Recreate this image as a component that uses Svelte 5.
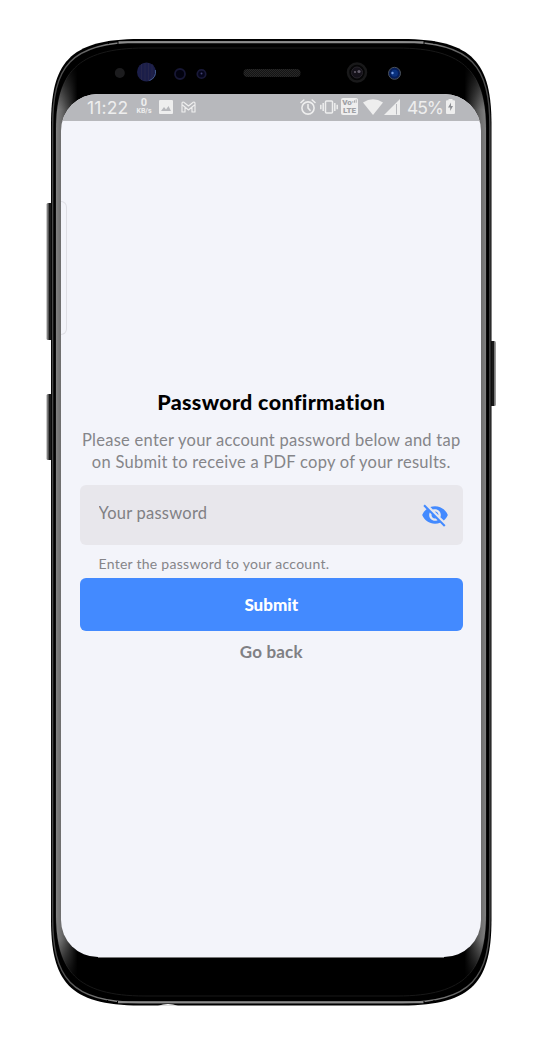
<script>
  let password = $state('');
  let visible = $state(false);
  const outer = 'M51 125C51 64 68 39 140 39H402C474 39 491.500 64 491.500 125V919C491.500 980 474 1005.500 402 1005.500H140C68 1005.500 51 980 51 919Z';
  const rim = 'M52.600 127C52.600 67 70 42 140 42H402C472 42 489.900 67 489.900 127V917C489.900 977 472 1002.500 402 1002.500H140C70 1002.500 52.600 977 52.600 917Z';
  const inner = 'M56 130C56 74 76 48 145 48H397C466 48 486 74 486 130V914C486 970 466 996 397 996H145C76 996 56 970 56 914Z';
</script>

<main class="phone">
  <svg class="frame" viewBox="0 0 542 1051" aria-hidden="true">
    <defs>
      <linearGradient id="sides" gradientUnits="userSpaceOnUse" x1="56" x2="486" y1="0" y2="0">
        <stop offset="0" stop-color="#808080" />
        <stop offset=".012" stop-color="#6d6d6d" />
        <stop offset=".035" stop-color="#303030" />
        <stop offset=".05" stop-color="#000" />
        <stop offset=".95" stop-color="#000" />
        <stop offset=".965" stop-color="#303030" />
        <stop offset=".988" stop-color="#6d6d6d" />
        <stop offset="1" stop-color="#808080" />
      </linearGradient>
      <linearGradient id="fade" x1="0" x2="0" y1="0" y2="1">
        <stop offset="0" stop-color="#000" />
        <stop offset=".015" stop-color="#000" />
        <stop offset=".065" stop-color="#fff" />
        <stop offset=".94" stop-color="#fff" />
        <stop offset=".985" stop-color="#000" />
      </linearGradient>
      <mask id="ends"><rect x="50" y="48" width="442" height="948" fill="url(#fade)" /></mask>
      <linearGradient id="rimLight" x1="0" x2="1" y1="0" y2="0">
        <stop offset="0" stop-color="#484848" />
        <stop offset=".1" stop-color="#707070" />
        <stop offset=".2" stop-color="#999" />
        <stop offset=".8" stop-color="#999" />
        <stop offset=".9" stop-color="#707070" />
        <stop offset="1" stop-color="#484848" />
      </linearGradient>
      <linearGradient id="key" x1="0" x2="1" y1="0" y2="0">
        <stop offset="0" stop-color="#999" />
        <stop offset=".3" stop-color="#666" />
        <stop offset=".45" stop-color="#151515" />
        <stop offset="1" stop-color="#222" />
      </linearGradient>
      <linearGradient id="keyRight" x1="1" x2="0" y1="0" y2="0">
        <stop offset="0" stop-color="#aaa" />
        <stop offset=".25" stop-color="#777" />
        <stop offset=".42" stop-color="#151515" />
        <stop offset="1" stop-color="#222" />
      </linearGradient>
      <pattern id="mesh" width="2" height="2" patternUnits="userSpaceOnUse">
        <rect width="2" height="2" fill="#141414" /><rect width="1" height="1" fill="#282828" /><rect x="1" y="1" width="1" height="1" fill="#282828" />
      </pattern>
    </defs>
    <rect x="46.500" y="203" width="6" height="137" rx="1.500" fill="url(#key)" />
    <rect x="46.500" y="394" width="6" height="66" rx="1.500" fill="url(#key)" />
    <rect x="490" y="341" width="6" height="65" rx="1.500" fill="url(#keyRight)" />
    <path d={outer} fill="#000" />
    <path d={rim} fill="none" stroke="url(#rimLight)" stroke-width="1.400" />
    <path d="M118 42.300H424M118 1002.200H424" stroke="#8c8c8c" stroke-width="2" />
    <path d={inner} fill="none" stroke="#181818" />
    <path d={inner} fill="url(#sides)" mask="url(#ends)" />
    <path d="M108.500 41v3M118 41v3M424 41v3M434 41v3M107.500 1000v3M117.500 1001v3M424 1001v3M434 1000v3" stroke="#000" />
    <path d="M158 1005.700q10-3.500 20 0z" fill="#fff" />
    <path d="M98 957.500H444" stroke="#777" />
    <circle cx="119.800" cy="73" r="5" fill="#1c1c1e" />
    <circle cx="146.500" cy="72" r="9.500" fill="#1b1e49" />
    <path d="M141.500 64v16M145 63v18M148.500 63v18M152 64v15" stroke="#26264b" />
    <path d="M155.400 70a9 9 0 0 1-6 10.500" fill="none" stroke="#405888" />
    <circle cx="180" cy="74" r="5" fill="#02020f" stroke="#171735" stroke-width="1.800" />
    <circle cx="201.500" cy="74" r="4.200" fill="#05051a" stroke="#191939" stroke-width="1.700" />
    <circle cx="201.500" cy="73.500" r="1" fill="#444475" />
    <rect x="243.500" y="69" width="57" height="8" rx="4" fill="url(#mesh)" />
    <circle cx="357" cy="72.500" r="9" fill="#060607" stroke="#19191a" stroke-width="2.500" />
    <circle cx="357" cy="72.500" r="5.500" fill="#15121a" stroke="#28252b" />
    <circle cx="355" cy="72" r="1.100" fill="#625c69" /><circle cx="359" cy="71.500" r="1.600" fill="#625c69" />
    <circle cx="394.500" cy="73.300" r="6" fill="#061e59" stroke="#4b5159" />
    <circle cx="394.500" cy="73.300" r="3.500" fill="#0a327f" />
    <circle cx="392.500" cy="73" r="1.200" fill="#779de2" />
  </svg>

  <section class="screen">
    <header class="status">
      <time>11:22</time>
      <span class="speed"><b>0</b><small>KB/s</small></span>
      <svg class="photo" viewBox="0 0 14 14"><path d="M1 0h12q1 0 1 1v12q0 1-1 1H1q-1 0-1-1V1q0-1 1-1Z" fill="#eee" /><path d="M2 11l3-4 2 2.500L9.500 6 12 11Z" fill="#b7b8bc" /></svg>
      <svg class="mail" viewBox="0 0 15 12"><path d="M1 11V2.300Q1.200.6 2.800 1.200L7.500 5l4.700-3.800Q13.800.6 14 2.300V11h-3V6L7.500 9 4 6v5ZM4 6 1.500 4M11 6l2.500-2" fill="none" stroke="#eee" stroke-width="1.150" stroke-linejoin="round" /></svg>
      <span class="space"></span>
      <svg class="alarm" viewBox="0 0 16 16" fill="none" stroke="#eee" stroke-linecap="round"><circle cx="8" cy="9" r="6.100" stroke-width="1.600" /><path d="M8 5.500V9l2 2.300M1 3.500 3.800 1M15 3.500 12.200 1" stroke-width="1.600" /></svg>
      <svg class="vibrate" viewBox="0 0 18 14" fill="none" stroke="#eee" stroke-width="1.500"><rect x="5.500" y="1" width="7" height="12" rx="1" /><path d="M3.200 3v8M14.800 3v8M.8 4.800v4.400M17.200 4.800v4.400" /></svg>
      <span class="lte"><span>Vo<svg viewBox="0 0 6 5"><path d="M1 4V2M3 4V1M5 4V0" stroke="#a0a1a5" /></svg></span><span>LTE</span></span>
      <svg class="wifi" viewBox="0 0 20 16"><path d="M0 3.500Q10-3 20 3.500L10 16Z" fill="#eee" /></svg>
      <svg class="signal" viewBox="0 0 16 16"><path d="M0 16 16 0v16Z" fill="#eee" /><path d="M12.500 5v10.500" stroke="#b7b8bc" /></svg>
      <span class="percent">45%</span>
      <svg class="battery" viewBox="0 0 9 15"><path d="M2.500 1.200V0h4v1.200H8q1 0 1 1V14q0 1-1 1H1q-1 0-1-1V2.200q0-1 1-1Z" fill="#eee" /><path d="M5 3.500 2 8.500h2.200V12l2.800-5H5Z" fill="#8e9095" /></svg>
    </header>

    <div class="edge"></div>
    <form onsubmit={(event) => event.preventDefault()}>
      <h1>Password confirmation</h1>
      <p class="intro">Please enter your account password below and tap<br />on Submit to receive a PDF copy of your results.</p>
      <div class="field">
        <input type={visible ? 'text' : 'password'} bind:value={password} placeholder="Your password" />
        <button type="button" class="eye" aria-label="Toggle password" onclick={() => (visible = !visible)}>
          <svg viewBox="0 0 24 24"><path d="M12 7c2.760 0 5 2.240 5 5 0 .650-.130 1.260-.360 1.830l2.920 2.920c1.510-1.260 2.700-2.890 3.430-4.750-1.730-4.390-6-7.500-11-7.500-1.400 0-2.740.250-3.980.700l2.160 2.160C10.740 7.130 11.350 7 12 7zM2 4.270l2.280 2.280.460.460C3.080 8.300 1.780 10.020 1 12c1.730 4.390 6 7.500 11 7.500 1.550 0 3.030-.300 4.380-.840l.420.420L19.730 22 21 20.730 3.270 3 2 4.270zM7.530 9.800l1.550 1.550c-.050.210-.080.430-.080.650 0 1.660 1.340 3 3 3 .220 0 .440-.030.650-.080l1.550 1.550c-.670.330-1.410.530-2.200.530-2.760 0-5-2.240-5-5 0-.790.200-1.530.530-2.200zm4.310-.780l3.150 3.150.020-.160c0-1.660-1.340-3-3-3l-.170.010z" fill="#438aff" /></svg>
        </button>
      </div>
      <p class="hint">Enter the password to your account.</p>
      <button class="submit">Submit</button>
      <button type="button" class="back">Go back</button>
    </form>
  </section>
</main>

<style>
  :global(body) { margin: 0; background: #fff; }
  * { box-sizing: border-box; }
  .phone { position: relative; width: 542px; height: 1051px; padding: 93.500px 61px; font-family: Lato, sans-serif; }
  .frame { position: absolute; inset: 0; width: 542px; height: 1051px; }
  .screen { position: relative; width: 420px; height: 863.800px; overflow: hidden; border-radius: 37px; background: #f3f4fa; }
  .status { display: flex; align-items: center; height: 27.500px; padding: 0 26px 1px 26px; background: #b7b8bc; color: #eee; font-family: Inter, sans-serif; }
  time, .percent { font-size: 17.500px; line-height: 26px; padding-top: 2px; white-space: nowrap; }
  time { width: 43px; letter-spacing: .15px; }
  .speed { display: flex; flex-direction: column; align-items: center; width: 18px; margin-left: 5px; font-family: Roboto, sans-serif; }
  .speed b { font-size: 11px; line-height: 10px; }
  .speed small { font-size: 7px; line-height: 7px; font-weight: 700; }
  .photo { width: 14px; height: 14px; margin-left: 6px; }
  .mail { width: 15px; height: 12px; margin-left: 8px; }
  .space { flex: 1; }
  .alarm { width: 16px; height: 16px; }
  .vibrate { width: 18px; height: 14px; margin-left: 4px; }
  .lte { display: flex; flex-direction: column; align-items: center; justify-content: center; width: 17px; height: 17px; margin-left: 3px; border-radius: 2px; background: #eee; color: #a0a1a5; font: 900 8px/7.500px Roboto, sans-serif; white-space: nowrap; }
  .lte svg { width: 5px; height: 5px; vertical-align: top; }
  .wifi { width: 20px; height: 16px; margin-left: 5px; }
  .signal { width: 16px; height: 16px; margin-left: 1px; }
  .percent { margin-left: 7px; width: 35px; letter-spacing: -1.100px; }
  .battery { width: 9px; height: 15px; margin-left: 4px; }
  .edge { width: 6px; height: 134px; margin-top: 79.500px; border: 1px solid #dfdfe5; border-left: 0; border-radius: 0 6px 6px 0; }
  form { display: flex; flex-direction: column; width: 383.500px; margin: 54px 0 0 18.500px; }
  h1 { margin: 0; color: #000; text-align: center; font-size: 21.500px; line-height: 26px; font-weight: 900; letter-spacing: .32px; white-space: nowrap; }
  .intro { margin: 14px -5px 0; color: #858589; text-align: center; font-size: 16.500px; line-height: 22px; letter-spacing: .26px; white-space: nowrap; }
  .field { display: flex; align-items: center; height: 60px; margin-top: 12px; padding: 0 14px 0 19px; border-radius: 6px; background: #e8e7ec; }
  input { flex: 1; min-width: 0; padding: 0 0 3px; border: 0; outline: 0; background: none; color: #77777b; font: 16.500px Lato, sans-serif; letter-spacing: .23px; }
  input::placeholder { color: #808084; opacity: 1; }
  button { padding: 0; border: 0; background: none; font-family: Lato, sans-serif; }
  .eye { width: 28px; height: 28px; }
  .eye svg { display: block; width: 28px; height: 28px; }
  .hint { margin: 9px 0 0 19px; color: #858589; font-size: 14px; line-height: 20px; letter-spacing: .27px; white-space: nowrap; }
  .submit { height: 53px; margin-top: 4px; border-radius: 6px; background: #438aff; color: #fff; font-size: 17px; font-weight: 900; }
  .back { margin-top: 10px; color: #808084; font-size: 17px; line-height: 22px; font-weight: 700; letter-spacing: .2px; }
</style>
